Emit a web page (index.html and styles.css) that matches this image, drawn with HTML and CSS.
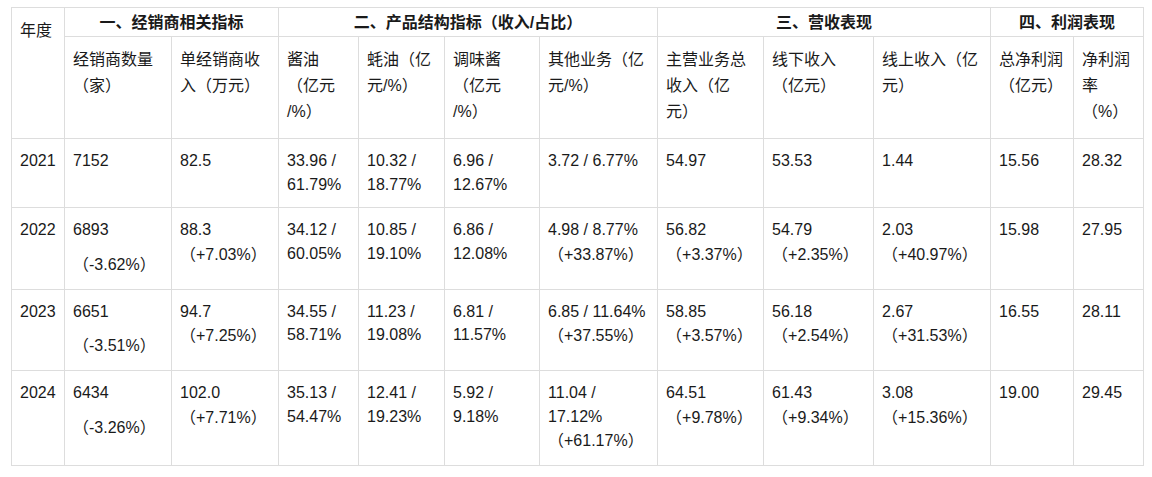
FILE: index.html
```html
<!DOCTYPE html>
<html lang="zh">
<head>
<meta charset="utf-8">
<title>经销商与营收指标</title>
<link rel="stylesheet" href="styles.css">
</head>
<body>
<div class="page">
<table class="data">
  <colgroup>
    <col class="c-year"><col class="c-a1"><col class="c-a2">
    <col class="c-b1"><col class="c-b2"><col class="c-b3"><col class="c-b4">
    <col class="c-c1"><col class="c-c2"><col class="c-c3">
    <col class="c-d1"><col class="c-d2">
  </colgroup>
  <thead>
    <tr class="group-row">
      <th class="year-head" rowspan="2">年度</th>
      <th class="group" colspan="2">一、经销商相关指标</th>
      <th class="group" colspan="4">二、产品结构指标（收入/占比）</th>
      <th class="group" colspan="3">三、营收表现</th>
      <th class="group" colspan="2">四、利润表现</th>
    </tr>
    <tr class="sub-row">
      <th>经销商数量（家）</th>
      <th>单经销商收入（万元）</th>
      <th>酱油（亿元<wbr>/%）</th>
      <th>蚝油（亿元/%）</th>
      <th>调味酱（亿元<wbr>/%）</th>
      <th>其他业务（亿元/%）</th>
      <th>主营业务总收入（亿元）</th>
      <th>线下收入（亿元）</th>
      <th>线上收入（亿元）</th>
      <th>总净利润（亿元）</th>
      <th>净利润率（%）</th>
    </tr>
  </thead>
  <tbody>
    <tr>
      <td>2021</td>
      <td>7152</td>
      <td>82.5</td>
      <td>33.96 / 61.79%</td>
      <td>10.32 / 18.77%</td>
      <td>6.96 / 12.67%</td>
      <td>3.72 / 6.77%</td>
      <td>54.97</td>
      <td>53.53</td>
      <td>1.44</td>
      <td>15.56</td>
      <td>28.32</td>
    </tr>
    <tr>
      <td>2022</td>
      <td>6893<span class="chg-block">（-3.62%）</span></td>
      <td>88.3<br><span class="chg">（+7.03%）</span></td>
      <td>34.12 / 60.05%</td>
      <td>10.85 / 19.10%</td>
      <td>6.86 / 12.08%</td>
      <td>4.98 / 8.77%<br><span class="chg">（+33.87%）</span></td>
      <td>56.82<br><span class="chg">（+3.37%）</span></td>
      <td>54.79<br><span class="chg">（+2.35%）</span></td>
      <td>2.03<br><span class="chg">（+40.97%）</span></td>
      <td>15.98</td>
      <td>27.95</td>
    </tr>
    <tr>
      <td>2023</td>
      <td>6651<span class="chg-block">（-3.51%）</span></td>
      <td>94.7<br><span class="chg">（+7.25%）</span></td>
      <td>34.55 / 58.71%</td>
      <td>11.23 / 19.08%</td>
      <td>6.81 / 11.57%</td>
      <td>6.85 / 11.64%<br><span class="chg">（+37.55%）</span></td>
      <td>58.85<br><span class="chg">（+3.57%）</span></td>
      <td>56.18<br><span class="chg">（+2.54%）</span></td>
      <td>2.67<br><span class="chg">（+31.53%）</span></td>
      <td>16.55</td>
      <td>28.11</td>
    </tr>
    <tr>
      <td>2024</td>
      <td>6434<span class="chg-block">（-3.26%）</span></td>
      <td>102.0<br><span class="chg">（+7.71%）</span></td>
      <td>35.13 / 54.47%</td>
      <td>12.41 / 19.23%</td>
      <td>5.92 / 9.18%</td>
      <td>11.04 / 17.12%<br><span class="chg">（+61.17%）</span></td>
      <td>64.51<br><span class="chg">（+9.78%）</span></td>
      <td>61.43<br><span class="chg">（+9.34%）</span></td>
      <td>3.08<br><span class="chg">（+15.36%）</span></td>
      <td>19.00</td>
      <td>29.45</td>
    </tr>
  </tbody>
</table>
</div>
</body>
</html>
```

FILE: styles.css
```css
html, body {
  margin: 0;
  padding: 0;
  background: #ffffff;
}

.page {
  padding: 7px 0 0 11px;
}

.data {
  border-collapse: collapse;
  table-layout: fixed;
  width: 1133px;
  font-family: "Liberation Sans", Arial, "Noto Sans CJK SC", sans-serif;
  font-size: 16px;
  color: #1a1a1a;
  text-spacing-trim: space-all;
}

.c-year { width: 53px; }
.c-a1 { width: 107px; }
.c-a2 { width: 107px; }
.c-b1 { width: 80px; }
.c-b2 { width: 86px; }
.c-b3 { width: 95px; }
.c-b4 { width: 118px; }
.c-c1 { width: 106px; }
.c-c2 { width: 110px; }
.c-c3 { width: 117px; }
.c-d1 { width: 83px; }
.c-d2 { width: 70px; }

.data th,
.data td {
  border: 1px solid #dddddd;
  text-align: left;
  vertical-align: top;
  font-weight: normal;
  padding: 10px 8px 11px 8px;
  text-spacing-trim: space-all;
}

.data td {
  line-height: 23.5px;
}

.chg {
  line-height: 26px;
}

.chg-block {
  display: block;
  margin-top: 10px;
  line-height: 26px;
}

.group-row .group {
  text-align: center;
  font-weight: bold;
  line-height: 23px;
  padding: 3px 8px 2px 8px;
}

.year-head {
  line-height: 26px;
  padding-top: 9px;
}

.sub-row th {
  line-height: 26px;
  padding-top: 10px;
  padding-bottom: 13px;
}
```
